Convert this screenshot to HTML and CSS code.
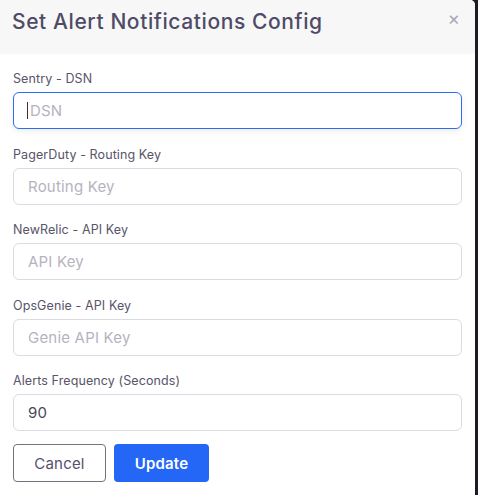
FILE: index.html
```html
<!DOCTYPE html>
<html>
<head>
<meta charset="utf-8">
<link rel="stylesheet" href="styles.css">
</head>
<body>
<div class="modal">
  <div class="modal-header">
    <h2 class="modal-title">Set Alert Notifications Config</h2>
    <span class="close">&times;</span>
  </div>
  <form class="modal-body">
    <div class="field">
      <label>Sentry - DSN</label>
      <div class="input focused"><span class="caret"></span><span class="ph">DSN</span></div>
    </div>
    <div class="field">
      <label>PagerDuty - Routing Key</label>
      <div class="input"><span class="ph">Routing Key</span></div>
    </div>
    <div class="field">
      <label>NewRelic - API Key</label>
      <div class="input"><span class="ph">API Key</span></div>
    </div>
    <div class="field">
      <label>OpsGenie - API Key</label>
      <div class="input"><span class="ph">Genie API Key</span></div>
    </div>
    <div class="field">
      <label>Alerts Frequency (Seconds)</label>
      <div class="input"><span class="val">90</span></div>
    </div>
    <div class="actions">
      <button type="button" class="btn btn-cancel">Cancel</button>
      <button type="button" class="btn btn-primary">Update</button>
    </div>
  </form>
</div>
</body>
</html>
```

FILE: styles.css
```css
html, body {
  margin: 0;
  padding: 0;
  background: #1b1d22;
  height: 100%;
  overflow: hidden;
}
body {
  font-family: "Inter", "Noto Sans", sans-serif;
}
.modal {
  width: 475px;
  height: 495px;
  background: #ffffff;
  border-top-right-radius: 5px;
  overflow: hidden;
}
.modal-header {
  height: 54px;
  background: #f7f7f8;
  display: flex;
  align-items: flex-start;
  justify-content: space-between;
  padding: 0 15px 0 12px;
  box-sizing: border-box;
}
.modal-title {
  margin: 9px 0 0;
  font-size: 21px;
  font-weight: 500;
  color: #4f4b66;
  letter-spacing: 0.6px;
  line-height: 26px;
}
.close {
  margin-top: 9px;
  font-size: 19px;
  color: #a9a8b4;
  line-height: 1;
}
.modal-body {
  padding: 16px 13px 0 13px;
  display: flex;
  flex-direction: column;
  gap: 16.5px;
}
.field {
  display: flex;
  flex-direction: column;
  gap: 6px;
}
label {
  font-size: 12.5px;
  color: #58546a;
  line-height: 15px;
  letter-spacing: 0.1px;
  padding-top: 1px;
}
.input {
  height: 37px;
  box-sizing: border-box;
  border: 1px solid #dcdae2;
  border-radius: 6px;
  display: flex;
  align-items: center;
  padding-left: 14px;
  font-size: 15px;
  letter-spacing: 0.2px;
}
.input.focused {
  border-color: #2b6ef0;
  box-shadow: 0 2px 6px rgba(0,0,0,0.08);
}
.caret {
  width: 1px;
  height: 17px;
  background: #333;
  margin-right: 2px;
  margin-left: -1px;
}
.ph {
  color: #b6b3be;
}
.val {
  color: #4a4658;
}
.actions {
  display: flex;
  gap: 8px;
  margin-top: -3.5px;
}
.btn {
  height: 38px;
  border-radius: 4px;
  font-family: inherit;
  font-size: 15px;
  padding: 0;
  cursor: pointer;
  letter-spacing: 0.2px;
}
.btn-cancel {
  width: 93px;
  background: #fff;
  border: 1px solid #75727f;
  color: #55516a;
}
.btn-primary {
  width: 95px;
  background: #2466f5;
  border: none;
  color: #fff;
  font-weight: 600;
}
```
